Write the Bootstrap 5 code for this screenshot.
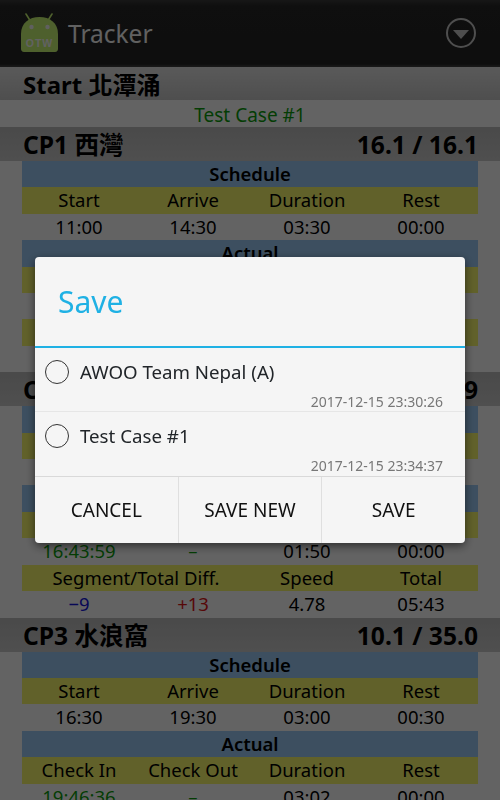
<!DOCTYPE html>
<html lang="en">
<head>
  <meta charset="UTF-8">
  <title>Tracker</title>
  <link href="https://cdn.jsdelivr.net/npm/bootstrap@5.3.3/dist/css/bootstrap.min.css" rel="stylesheet">
  <style>
    html, body { height: 800px; overflow: hidden; }
    body { font-family: "Noto Sans", "Noto Sans CJK TC", sans-serif; background: #f8f8f8; color: #000; }
    .app-bar { height: 67px; background: linear-gradient(#3a3a3a 0, #262626 6px, #242424 64px, #3c3c3c 66px); padding: 0 24px 2px 21px; }
    .app-title { font-size: 24.5px; color: #f2f2f2; margin-left: 10px; padding-top: 4px; line-height: 1; }
    .start-head { height: 33px; background: linear-gradient(#e0e0e0, #c4c4c4); font-size: 24px; font-weight: 700; line-height: 35px; padding-left: 23px; }
    .team-line { height: 27px; line-height: 30px; font-size: 19px; color: #0c9a0c; text-align: center; }
    .cp-head { height: 34px; background: linear-gradient(#b8b8b8, #c6c6c6); font-size: 24.6px; font-weight: 700; line-height: 35px; padding: 0 22px 0 23px; }
    .cp-body { margin: 0 22px; font-size: 18.5px; line-height: 26.4px; text-align: center; }
    .bar-blue { background: #99c6f0; font-weight: 600; }
    .bar-yellow { background: #f2f26a; }
    .txt-green { color: #0c9a0c; }
    .txt-blue { color: #1414d8; }
    .txt-red { color: #d81414; }
    .dim-layer { --bs-backdrop-opacity: .6; }
    .save-modal .modal-dialog { max-width: 430px; margin: 0 auto; min-height: 100%; }
    .save-modal .modal-content { background: #f5f5f5; border: 0; border-radius: 4px; box-shadow: 0 3px 10px rgba(0,0,0,.55); }
    .save-title { height: 91px; border-bottom: 2px solid #1fb1e4; padding: 0 23px; font-size: 30px; line-height: 89px; color: #1fb1e4; }
    .save-item { height: 64px; padding: 10px 22px 0 10px; background: transparent; border-color: #e6e6e6; font-size: 18.7px; }
    .save-item .form-check-input { width: 24px; height: 24px; margin: 0 11px 1px 0; background-color: transparent; border: 1px solid #333; flex: none; }
    .save-stamp { font-size: 14px; color: #777; text-align: right; line-height: 16px; margin-top: 8px; }
    .save-btns { height: 67px; border-top: 1px solid #d9d9d9; }
    .save-btn { flex: 1 1 0; border: 0; border-radius: 0; font-size: 19px; color: #111; background: transparent; }
    .save-btn + .save-btn { border-left: 1px solid #dfdfdf; }
  </style>
</head>
<body>

<div class="app-bar d-flex align-items-center">
  <svg width="37" height="39" viewBox="0 0 37 39">
    <path d="M5 1 10 9M31 1 26 9" stroke="#c4f070" stroke-width="1.600" stroke-linecap="round"/>
    <path d="M0 36V21C0 10 8 4 18.500 4S37 10 37 21v15c0 1.500-1 3-3 3H3c-2 0-3-1.500-3-3z" fill="#c4f070"/>
    <circle cx="10.500" cy="14" r="2.200" fill="#f0f0f0"/>
    <circle cx="26.500" cy="14" r="2.200" fill="#f0f0f0"/>
    <text x="18.500" y="34" text-anchor="middle" font-family="Liberation Sans, sans-serif" font-size="10.500" font-weight="700" letter-spacing="1" fill="#f4f4f4">OTW</text>
  </svg>
  <div class="app-title">Tracker</div>
  <svg class="ms-auto" width="30" height="30" viewBox="0 0 30 30">
    <circle cx="15" cy="15" r="14" fill="none" stroke="#c4c4c4" stroke-width="2"/>
    <path d="M7 12H23L15 21z" fill="#c4c4c4"/>
  </svg>
</div>

<div class="start-head">Start 北潭涌</div>
<div class="team-line">Test Case #1</div>

<div class="cp-head d-flex justify-content-between"><span>CP1 西灣</span><span>16.1 / 16.1</span></div>
<div class="cp-body">
  <div class="bar-blue">Schedule</div>
  <div class="row g-0 bar-yellow"><div class="col-3">Start</div><div class="col-3">Arrive</div><div class="col-3">Duration</div><div class="col-3">Rest</div></div>
  <div class="row g-0"><div class="col-3">11:00</div><div class="col-3">14:30</div><div class="col-3">03:30</div><div class="col-3">00:00</div></div>
  <div class="bar-blue">Actual</div>
  <div class="row g-0 bar-yellow"><div class="col-3">Check In</div><div class="col-3">Check Out</div><div class="col-3">Duration</div><div class="col-3">Rest</div></div>
  <div class="row g-0"><div class="col-3 txt-green">14:52:00</div><div class="col-3 txt-green">–</div><div class="col-3">03:52</div><div class="col-3">00:00</div></div>
  <div class="row g-0 bar-yellow"><div class="col-6">Segment/Total Diff.</div><div class="col-3">Speed</div><div class="col-3">Total</div></div>
  <div class="row g-0"><div class="col-3 txt-red">+22</div><div class="col-3 txt-red">+22</div><div class="col-3">4.16</div><div class="col-3">03:52</div></div>
</div>

<div class="cp-head d-flex justify-content-between"><span>CP2</span><span>8.8 / 24.9</span></div>
<div class="cp-body">
  <div class="bar-blue">Schedule</div>
  <div class="row g-0 bar-yellow"><div class="col-3">Start</div><div class="col-3">Arrive</div><div class="col-3">Duration</div><div class="col-3">Rest</div></div>
  <div class="row g-0"><div class="col-3">14:30</div><div class="col-3">16:30</div><div class="col-3">02:00</div><div class="col-3">00:00</div></div>
  <div class="bar-blue">Actual</div>
  <div class="row g-0 bar-yellow"><div class="col-3">Check In</div><div class="col-3">Check Out</div><div class="col-3">Duration</div><div class="col-3">Rest</div></div>
  <div class="row g-0"><div class="col-3 txt-green">16:43:59</div><div class="col-3 txt-green">–</div><div class="col-3">01:50</div><div class="col-3">00:00</div></div>
  <div class="row g-0 bar-yellow"><div class="col-6">Segment/Total Diff.</div><div class="col-3">Speed</div><div class="col-3">Total</div></div>
  <div class="row g-0"><div class="col-3 txt-blue">−9</div><div class="col-3 txt-red">+13</div><div class="col-3">4.78</div><div class="col-3">05:43</div></div>
</div>

<div class="cp-head d-flex justify-content-between"><span>CP3 水浪窩</span><span>10.1 / 35.0</span></div>
<div class="cp-body">
  <div class="bar-blue">Schedule</div>
  <div class="row g-0 bar-yellow"><div class="col-3">Start</div><div class="col-3">Arrive</div><div class="col-3">Duration</div><div class="col-3">Rest</div></div>
  <div class="row g-0"><div class="col-3">16:30</div><div class="col-3">19:30</div><div class="col-3">03:00</div><div class="col-3">00:30</div></div>
  <div class="bar-blue">Actual</div>
  <div class="row g-0 bar-yellow"><div class="col-3">Check In</div><div class="col-3">Check Out</div><div class="col-3">Duration</div><div class="col-3">Rest</div></div>
  <div class="row g-0"><div class="col-3 txt-green">19:46:36</div><div class="col-3 txt-green">–</div><div class="col-3">03:02</div><div class="col-3">00:00</div></div>
</div>

<div class="modal-backdrop show dim-layer"></div>
<div class="modal d-block save-modal">
  <div class="modal-dialog modal-dialog-centered">
    <div class="modal-content">
      <div class="save-title">Save</div>
      <div class="list-group list-group-flush">
        <label class="list-group-item save-item">
          <span class="d-flex align-items-center"><input class="form-check-input" type="radio" name="saved"><span>AWOO Team Nepal (A)</span></span>
          <div class="save-stamp">2017-12-15 23:30:26</div>
        </label>
        <label class="list-group-item save-item">
          <span class="d-flex align-items-center"><input class="form-check-input" type="radio" name="saved"><span>Test Case #1</span></span>
          <div class="save-stamp">2017-12-15 23:34:37</div>
        </label>
      </div>
      <div class="save-btns d-flex">
        <button class="btn save-btn">CANCEL</button>
        <button class="btn save-btn">SAVE NEW</button>
        <button class="btn save-btn">SAVE</button>
      </div>
    </div>
  </div>
</div>

<script src="https://cdn.jsdelivr.net/npm/bootstrap@5.3.3/dist/js/bootstrap.bundle.min.js"></script>
</body>
</html>
